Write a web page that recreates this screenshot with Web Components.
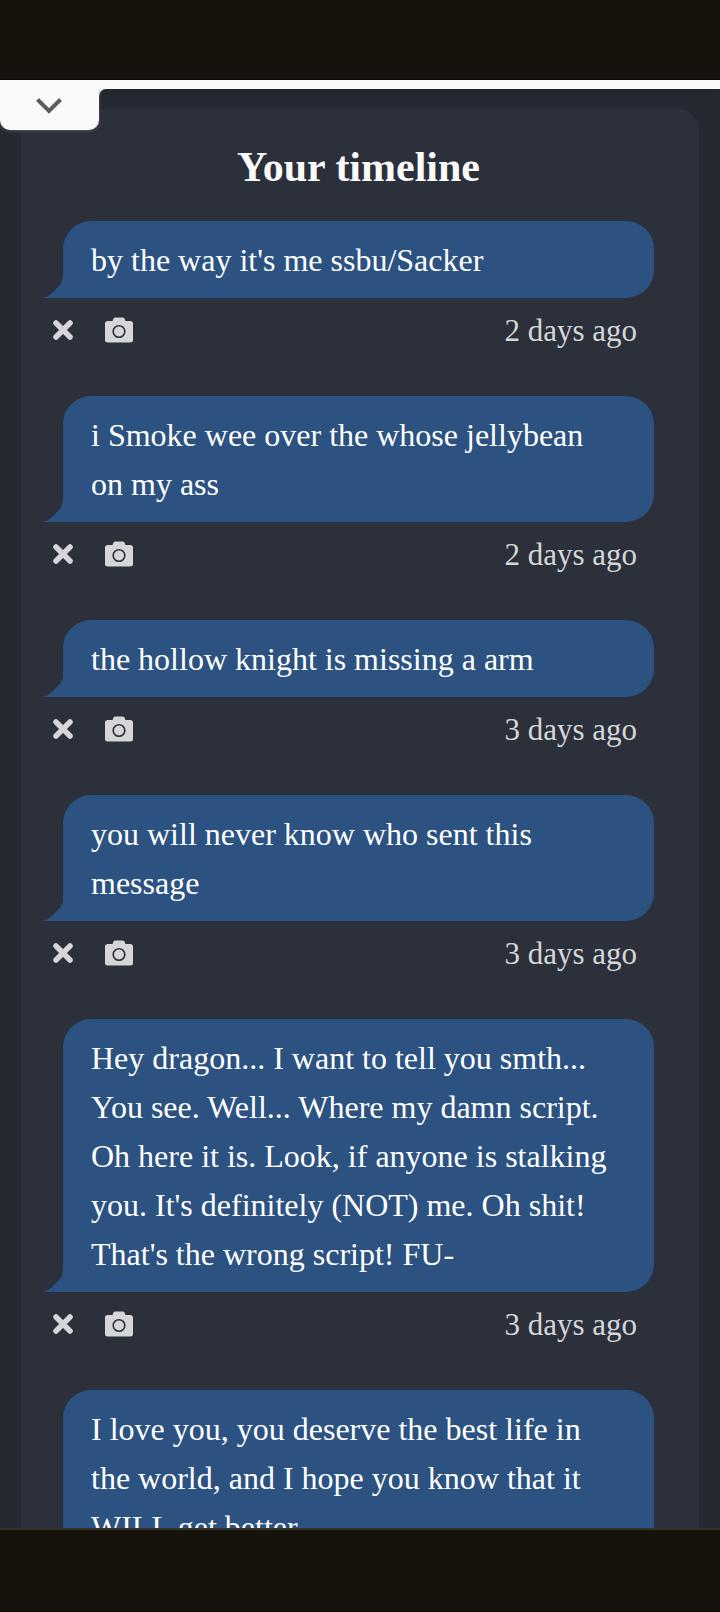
<!DOCTYPE html>
<html lang="en">
<head>
<meta charset="utf-8">
<meta name="viewport" content="width=device-width, initial-scale=1">
<title>Your timeline</title>
<style>
  body { margin: 0; background: #252932; font-family: "Liberation Serif", "Times New Roman", serif; }
</style>
</head>
<body>
<app-shell>
  <pull-tab slot="tab"></pull-tab>
  <timeline-card heading="Your timeline">
    <timeline-message time="2 days ago">by the way it's me ssbu/Sacker</timeline-message>
    <timeline-message time="2 days ago">i Smoke wee over the whose jellybean on my ass</timeline-message>
    <timeline-message time="3 days ago">the hollow knight is missing a arm</timeline-message>
    <timeline-message time="3 days ago">you will never know who sent this message</timeline-message>
    <timeline-message time="3 days ago">Hey dragon... I want to tell you smth... You see. Well... Where my damn script. Oh here it is. Look, if anyone is stalking you. It's definitely (NOT) me. Oh shit! That's the wrong script! FU-</timeline-message>
    <timeline-message time="3 days ago">I love you, you deserve the best life in the world, and I hope you know that it WILL get better</timeline-message>
  </timeline-card>
</app-shell>

<script>
const define = (name, html, setup) => {
  const template = document.createElement('template');
  template.innerHTML = html;
  customElements.define(name, class extends HTMLElement {
    constructor() {
      super();
      this.attachShadow({ mode: 'open' }).append(template.content.cloneNode(true));
    }
    connectedCallback() { if (setup) setup(this, this.shadowRoot); }
  });
};

define('app-shell', `
  <style>
    :host { display: flex; flex-direction: column; height: 100vh; }
    .top { flex: none; height: 80px; box-sizing: border-box; background: #16130c; border-bottom: 1px solid #080704; }
    .strip { flex: none; height: 9px; background: #fafafa; position: relative; z-index: 1; box-shadow: 0 1px 4px #1f2727; }
    .view { flex: 1; min-height: 0; overflow: hidden; background: #252932; padding: 20px 21px 0; }
    .bottom { flex: none; height: 84px; box-sizing: border-box; background: #16130c; border-top: 2px solid #37332a; border-bottom: 1px solid #080704; }
  </style>
  <div class="top"></div>
  <div class="strip"><slot name="tab"></slot></div>
  <main class="view"><slot></slot></main>
  <div class="bottom"></div>
`);

define('pull-tab', `
  <style>
    :host { position: absolute; left: 0; top: 100%; display: flex; align-items: flex-start; }
    button { display: grid; place-items: center; width: 99px; height: 41px; padding: 0 2px 8px 0; border: 0;
      border-radius: 0 0 10px 10px; background: #fafafa; box-shadow: 0 1px 3px #555a63; clip-path: inset(0 -6px -6px 0); }
    .corner { display: block; }
  </style>
  <button type="button" aria-label="Collapse">
    <svg width="26" height="16" viewBox="0 0 26 16" fill="none" stroke="#5d5d5d" stroke-width="4"><path d="M1.5 1.5 13 13 24.5 1.5"/></svg>
  </button>
  <svg class="corner" width="7" height="8" viewBox="0 0 7 8" fill="#fafafa"><path d="M0 0H7Q1 0 0 8Z"/></svg>
`);

define('timeline-card', `
  <style>
    :host { display: block; border-radius: 21px 21px 0 0; background: #2b303b; padding: 34px 45px 0 42px; }
    h1 { margin: 0 0 29px; text-align: center; font-size: 42px; line-height: 49px; font-weight: 700; color: #fafafa; }
    .list { display: flex; flex-direction: column; gap: 49px; }
  </style>
  <h1></h1>
  <div class="list"><slot></slot></div>
`, (el, root) => { root.querySelector('h1').textContent = el.getAttribute('heading'); });

define('timeline-message', `
  <style>
    :host { display: block; }
    .bubble { position: relative; background: #2c5282; border-radius: 28px 28px 28px 0; padding: 15px 36px 13px 28px; color: #fff; font-size: 32px; line-height: 49px; }
    p { margin: 0; }
    .tail { position: absolute; right: 100%; bottom: 0; display: block; }
    footer { display: flex; align-items: center; height: 49px; padding: 16px 17px 0 0; box-sizing: border-box; color: #d5d6d8; }
    .actions { display: flex; gap: 30px; margin-left: -12px; flex: 1; align-items: center; }
    button { display: grid; place-items: center; padding: 0 0 2px; border: 0; background: none; color: inherit; }
    .delete { width: 24px; height: 30px; }
    .photo { width: 28px; height: 30px; }
    time { font-size: 31px; line-height: 36px; }
  </style>
  <div class="bubble">
    <p><slot></slot></p>
    <svg class="tail" width="22" height="22" viewBox="0 0 22 22" fill="#2c5282"><path d="M22 0C22 7 17 11 14 14C10 18 6 22 0 22H22Z"/></svg>
  </div>
  <footer>
    <div class="actions">
      <button class="delete" type="button" aria-label="Delete">
        <svg width="20" height="20" viewBox="0 0 20 20" fill="none" stroke="currentColor" stroke-width="5.5" stroke-linecap="round"><path d="M3 3 17 17M17 3 3 17"/></svg>
      </button>
      <button class="photo" type="button" aria-label="Save as picture">
        <svg width="28" height="26" viewBox="0 0 28 26"><path fill="currentColor" d="M3 4H7.5L8.5 1.5Q9 .5 10.500 .5H17.5Q19 .5 19.5 1.500L20.5 4H25Q28 4 28 6.500V23Q28 25.500 25 25.500H3Q0 25.500 0 23V6.500Q0 4 3 4Z"/><circle cx="14" cy="14.500" r="5.800" fill="none" stroke="#2b303b" stroke-width="1.600"/></svg>
      </button>
    </div>
    <time></time>
  </footer>
`, (el, root) => { root.querySelector('time').textContent = el.getAttribute('time'); });
</script>
</body>
</html>
